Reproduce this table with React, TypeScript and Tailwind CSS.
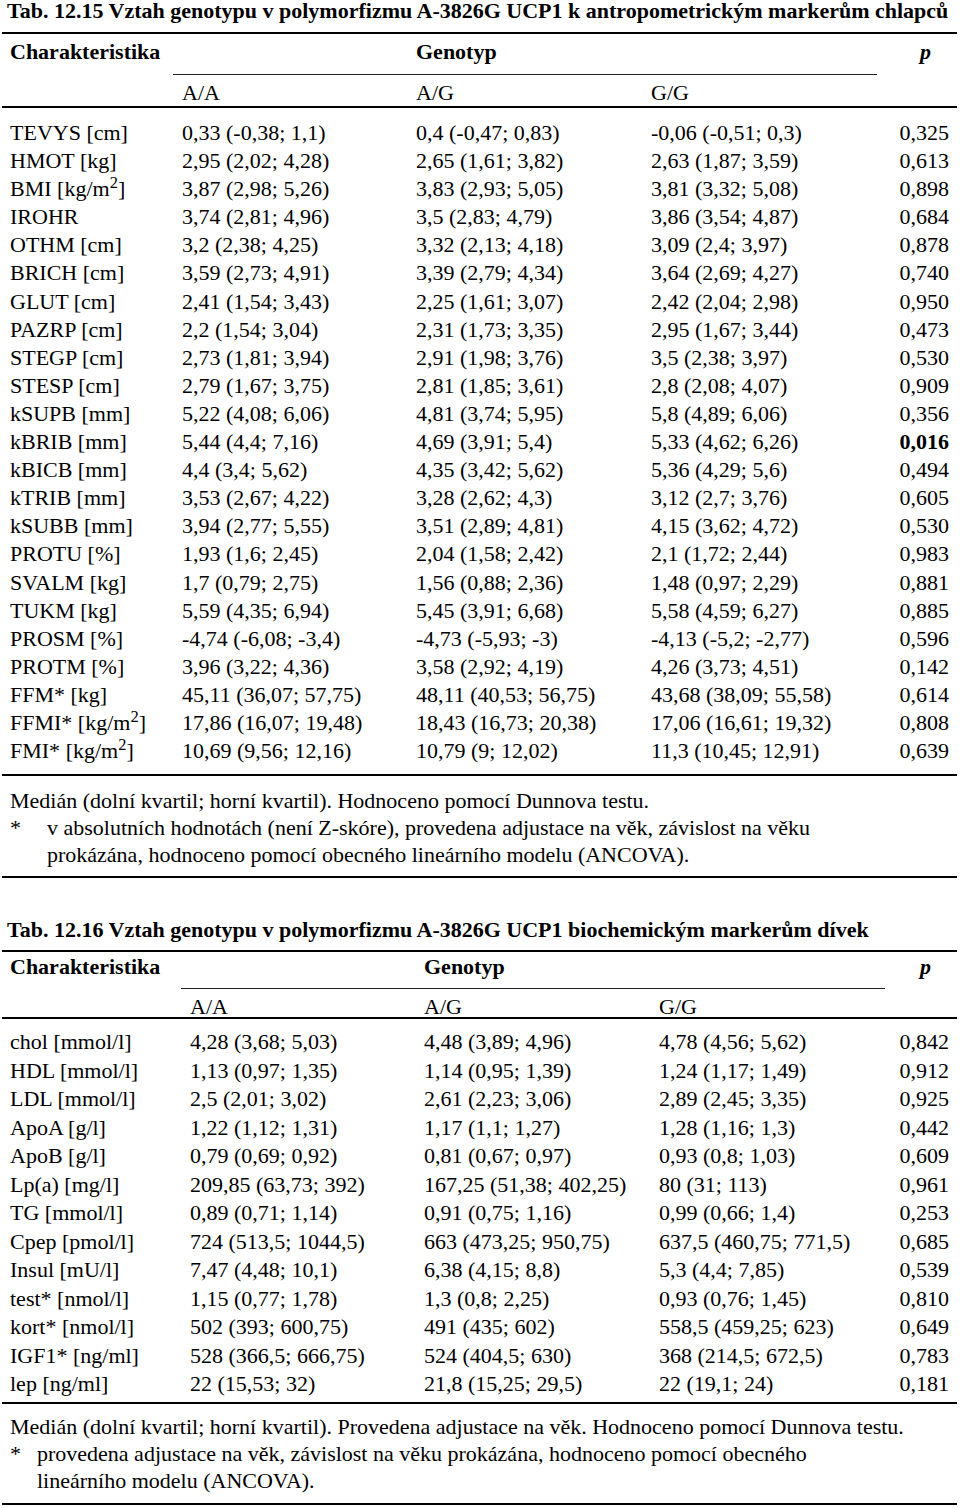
import type { ReactNode } from "react";

type Row = { label: ReactNode; aa: string; ag: string; gg: string; p: string; bold?: boolean };

const m2 = (
  <>
    [kg/m<sup>2</sup>]
  </>
);

const anthro: Row[] = [
  { label: "TEVYS [cm]", aa: "0,33 (-0,38; 1,1)", ag: "0,4 (-0,47; 0,83)", gg: "-0,06 (-0,51; 0,3)", p: "0,325" },
  { label: "HMOT [kg]", aa: "2,95 (2,02; 4,28)", ag: "2,65 (1,61; 3,82)", gg: "2,63 (1,87; 3,59)", p: "0,613" },
  { label: <>BMI {m2}</>, aa: "3,87 (2,98; 5,26)", ag: "3,83 (2,93; 5,05)", gg: "3,81 (3,32; 5,08)", p: "0,898" },
  { label: "IROHR", aa: "3,74 (2,81; 4,96)", ag: "3,5 (2,83; 4,79)", gg: "3,86 (3,54; 4,87)", p: "0,684" },
  { label: "OTHM [cm]", aa: "3,2 (2,38; 4,25)", ag: "3,32 (2,13; 4,18)", gg: "3,09 (2,4; 3,97)", p: "0,878" },
  { label: "BRICH [cm]", aa: "3,59 (2,73; 4,91)", ag: "3,39 (2,79; 4,34)", gg: "3,64 (2,69; 4,27)", p: "0,740" },
  { label: "GLUT [cm]", aa: "2,41 (1,54; 3,43)", ag: "2,25 (1,61; 3,07)", gg: "2,42 (2,04; 2,98)", p: "0,950" },
  { label: "PAZRP [cm]", aa: "2,2 (1,54; 3,04)", ag: "2,31 (1,73; 3,35)", gg: "2,95 (1,67; 3,44)", p: "0,473" },
  { label: "STEGP [cm]", aa: "2,73 (1,81; 3,94)", ag: "2,91 (1,98; 3,76)", gg: "3,5 (2,38; 3,97)", p: "0,530" },
  { label: "STESP [cm]", aa: "2,79 (1,67; 3,75)", ag: "2,81 (1,85; 3,61)", gg: "2,8 (2,08; 4,07)", p: "0,909" },
  { label: "kSUPB [mm]", aa: "5,22 (4,08; 6,06)", ag: "4,81 (3,74; 5,95)", gg: "5,8 (4,89; 6,06)", p: "0,356" },
  { label: "kBRIB [mm]", aa: "5,44 (4,4; 7,16)", ag: "4,69 (3,91; 5,4)", gg: "5,33 (4,62; 6,26)", p: "0,016", bold: true },
  { label: "kBICB [mm]", aa: "4,4 (3,4; 5,62)", ag: "4,35 (3,42; 5,62)", gg: "5,36 (4,29; 5,6)", p: "0,494" },
  { label: "kTRIB [mm]", aa: "3,53 (2,67; 4,22)", ag: "3,28 (2,62; 4,3)", gg: "3,12 (2,7; 3,76)", p: "0,605" },
  { label: "kSUBB [mm]", aa: "3,94 (2,77; 5,55)", ag: "3,51 (2,89; 4,81)", gg: "4,15 (3,62; 4,72)", p: "0,530" },
  { label: "PROTU [%]", aa: "1,93 (1,6; 2,45)", ag: "2,04 (1,58; 2,42)", gg: "2,1 (1,72; 2,44)", p: "0,983" },
  { label: "SVALM [kg]", aa: "1,7 (0,79; 2,75)", ag: "1,56 (0,88; 2,36)", gg: "1,48 (0,97; 2,29)", p: "0,881" },
  { label: "TUKM [kg]", aa: "5,59 (4,35; 6,94)", ag: "5,45 (3,91; 6,68)", gg: "5,58 (4,59; 6,27)", p: "0,885" },
  { label: "PROSM [%]", aa: "-4,74 (-6,08; -3,4)", ag: "-4,73 (-5,93; -3)", gg: "-4,13 (-5,2; -2,77)", p: "0,596" },
  { label: "PROTM [%]", aa: "3,96 (3,22; 4,36)", ag: "3,58 (2,92; 4,19)", gg: "4,26 (3,73; 4,51)", p: "0,142" },
  { label: "FFM* [kg]", aa: "45,11 (36,07; 57,75)", ag: "48,11 (40,53; 56,75)", gg: "43,68 (38,09; 55,58)", p: "0,614" },
  { label: <>FFMI* {m2}</>, aa: "17,86 (16,07; 19,48)", ag: "18,43 (16,73; 20,38)", gg: "17,06 (16,61; 19,32)", p: "0,808" },
  { label: <>FMI* {m2}</>, aa: "10,69 (9,56; 12,16)", ag: "10,79 (9; 12,02)", gg: "11,3 (10,45; 12,91)", p: "0,639" },
];

const biochem: Row[] = [
  { label: "chol [mmol/l]", aa: "4,28 (3,68; 5,03)", ag: "4,48 (3,89; 4,96)", gg: "4,78 (4,56; 5,62)", p: "0,842" },
  { label: "HDL [mmol/l]", aa: "1,13 (0,97; 1,35)", ag: "1,14 (0,95; 1,39)", gg: "1,24 (1,17; 1,49)", p: "0,912" },
  { label: "LDL [mmol/l]", aa: "2,5 (2,01; 3,02)", ag: "2,61 (2,23; 3,06)", gg: "2,89 (2,45; 3,35)", p: "0,925" },
  { label: "ApoA [g/l]", aa: "1,22 (1,12; 1,31)", ag: "1,17 (1,1; 1,27)", gg: "1,28 (1,16; 1,3)", p: "0,442" },
  { label: "ApoB [g/l]", aa: "0,79 (0,69; 0,92)", ag: "0,81 (0,67; 0,97)", gg: "0,93 (0,8; 1,03)", p: "0,609" },
  { label: "Lp(a) [mg/l]", aa: "209,85 (63,73; 392)", ag: "167,25 (51,38; 402,25)", gg: "80 (31; 113)", p: "0,961" },
  { label: "TG [mmol/l]", aa: "0,89 (0,71; 1,14)", ag: "0,91 (0,75; 1,16)", gg: "0,99 (0,66; 1,4)", p: "0,253" },
  { label: "Cpep [pmol/l]", aa: "724 (513,5; 1044,5)", ag: "663 (473,25; 950,75)", gg: "637,5 (460,75; 771,5)", p: "0,685" },
  { label: "Insul [mU/l]", aa: "7,47 (4,48; 10,1)", ag: "6,38 (4,15; 8,8)", gg: "5,3 (4,4; 7,85)", p: "0,539" },
  { label: "test* [nmol/l]", aa: "1,15 (0,77; 1,78)", ag: "1,3 (0,8; 2,25)", gg: "0,93 (0,76; 1,45)", p: "0,810" },
  { label: "kort* [nmol/l]", aa: "502 (393; 600,75)", ag: "491 (435; 602)", gg: "558,5 (459,25; 623)", p: "0,649" },
  { label: "IGF1* [ng/ml]", aa: "528 (366,5; 666,75)", ag: "524 (404,5; 630)", gg: "368 (214,5; 672,5)", p: "0,783" },
  { label: "lep [ng/ml]", aa: "22 (15,53; 32)", ag: "21,8 (15,25; 29,5)", gg: "22 (19,1; 24)", p: "0,181" },
];

const Rule = ({ className = "" }: { className?: string }) => <div className={`h-[2px] bg-black ${className}`} />;

export default function App() {
  return (
    <div className="min-h-screen bg-white text-black font-['Liberation_Serif',serif] text-[22px]">
      <div className="ml-[2px] w-[955px]">
        {/* Tab. 12.15 */}
        <div className="h-[32px] pl-[5px] font-bold leading-[21px] whitespace-nowrap">
          Tab. 12.15 Vztah genotypu v polymorfizmu A-3826G UCP1 k antropometrickým markerům chlapců
        </div>
        <Rule />
        <div className="grid h-[40px] grid-cols-[172px_234px_235px_1fr_auto] pl-[8px] pt-[6px] leading-[24px]">
          <span className="font-bold">Charakteristika</span>
          <span />
          <span className="font-bold">Genotyp</span>
          <span />
          <span className="pr-[26px] font-bold italic">p</span>
        </div>
        <div className="ml-[171px] h-px w-[704px] bg-[#222]" />
        <div className="grid h-[31px] grid-cols-[172px_234px_235px_1fr] pl-[8px] pt-[6px] leading-[24px]">
          <span />
          <span>A/A</span>
          <span>A/G</span>
          <span>G/G</span>
        </div>
        <Rule />
        <div className="pl-[8px] pr-[8px] pt-[11px] pb-[9px]">
          {anthro.map((r, i) => (
            <div key={i} className="grid h-[28.1px] grid-cols-[172px_234px_235px_1fr_auto] leading-[28.1px] whitespace-nowrap">
              <span>{r.label}</span>
              <span>{r.aa}</span>
              <span>{r.ag}</span>
              <span>{r.gg}</span>
              <span className={`text-right ${r.bold ? "font-bold" : ""}`}>{r.p}</span>
            </div>
          ))}
        </div>
        <Rule />
        <div className="pl-[8px] pt-[10.5px] pb-[8.5px] leading-[27px] whitespace-nowrap">
          <div>Medián (dolní kvartil; horní kvartil). Hodnoceno pomocí Dunnova testu.</div>
          <div className="flex">
            <span className="w-[37px] shrink-0">*</span>
            <span>
              v absolutních hodnotách (není Z-skóre), provedena adjustace na věk, závislost na věku
              <br />
              prokázána, hodnoceno pomocí obecného lineárního modelu (ANCOVA).
            </span>
          </div>
        </div>
        <Rule />

        {/* Tab. 12.16 */}
        <div className="mt-[41px] h-[31px] pl-[5px] font-bold leading-[21px] whitespace-nowrap">
          Tab. 12.16 Vztah genotypu v polymorfizmu A-3826G UCP1 biochemickým markerům dívek
        </div>
        <Rule />
        <div className="grid h-[36px] grid-cols-[180px_234px_235px_1fr_auto] pl-[8px] pt-[3px] leading-[24px]">
          <span className="font-bold">Charakteristika</span>
          <span />
          <span className="font-bold">Genotyp</span>
          <span />
          <span className="pr-[26px] font-bold italic">p</span>
        </div>
        <div className="ml-[179px] h-px w-[704px] bg-[#222]" />
        <div className="grid h-[28px] grid-cols-[180px_234px_235px_1fr] pl-[8px] pt-[6px] leading-[24px]">
          <span />
          <span>A/A</span>
          <span>A/G</span>
          <span>G/G</span>
        </div>
        <Rule />
        <div className="pl-[8px] pr-[8px] pt-[9px] pb-[3px]">
          {biochem.map((r, i) => (
            <div key={i} className="grid h-[28.5px] grid-cols-[180px_234px_235px_1fr_auto] leading-[28.5px] whitespace-nowrap">
              <span>{r.label}</span>
              <span>{r.aa}</span>
              <span>{r.ag}</span>
              <span>{r.gg}</span>
              <span className="text-right">{r.p}</span>
            </div>
          ))}
        </div>
        <Rule />
        <div className="pl-[8px] pt-[9px] pb-[9.5px] leading-[27px] whitespace-nowrap">
          <div>Medián (dolní kvartil; horní kvartil). Provedena adjustace na věk. Hodnoceno pomocí Dunnova testu.</div>
          <div className="flex">
            <span className="w-[27px] shrink-0">*</span>
            <span>
              provedena adjustace na věk, závislost na věku prokázána, hodnoceno pomocí obecného
              <br />
              lineárního modelu (ANCOVA).
            </span>
          </div>
        </div>
        <Rule />
      </div>
    </div>
  );
}
